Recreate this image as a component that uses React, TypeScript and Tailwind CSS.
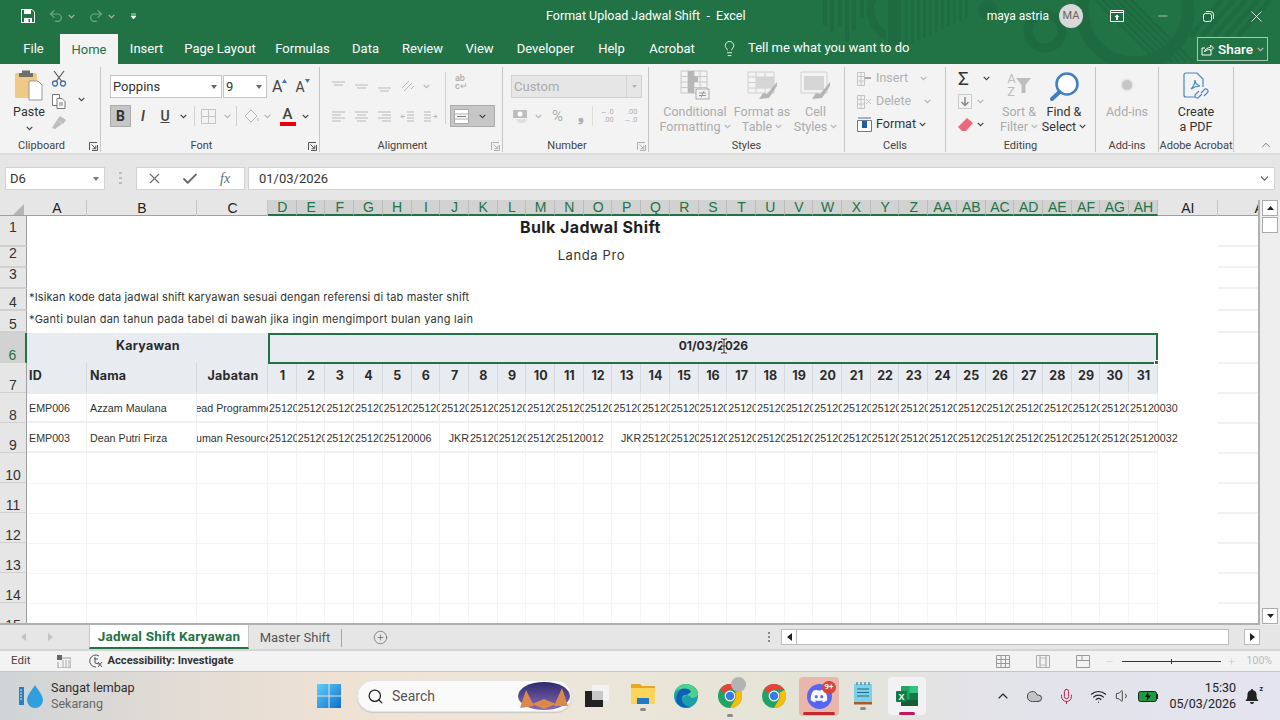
import React from "react";
import { ChevronDown, ChevronUp, Lightbulb, Search, Undo2, Redo2, X, Check, Minus, Mic, Wifi, Volume1, Plus, CirclePlus, Cloud } from "lucide-react";
import { FaDiscord } from "react-icons/fa";

const COLS = "grid grid-cols-[27px_60px_110px_71px_repeat(31,28.71px)_60px_41px]";
const SANS = "font-['Roboto',sans-serif]";
const POP = "font-['Inter',sans-serif]";
const ARIAL = "font-['Liberation_Sans',Arial,sans-serif]";

const Car = ({ dim = false, cls = "" }: { dim?: boolean; cls?: string }) => (
  <svg width="7" height="5" viewBox="0 0 7 5" className={cls}><path d="M.7.8 3.5 3.6 6.3.8" fill="none" stroke={dim ? "#b5b5b5" : "#444"} strokeWidth="1.2" /></svg>
);
const Launcher = ({ dim = false }: { dim?: boolean }) => (
  <svg width="9" height="9" viewBox="0 0 9 9"><path d="M.5 8V.5H8M8.5 3v5.5H3M2.5 2.5l4 4M6.8 3.5v3.2H3.6" fill="none" stroke={dim ? "#b0b0b0" : "#555"} /></svg>
);
const Lines = ({ a }: { a: "l" | "c" | "r" }) => {
  const d = a === "l" ? "M1 2h13M1 5h9M1 8h13M1 11h9" : a === "c" ? "M1 2h13M3 5h9M1 8h13M3 11h9" : "M1 2h13M5 5h9M1 8h13M5 11h9";
  return <svg width="15" height="13" viewBox="0 0 15 13"><path d={d} stroke="#b9b9b9" /></svg>;
};
const VAlign = ({ o }: { o: number }) => (
  <svg width="15" height="15" viewBox="0 0 15 15"><path d={`M1 ${o}h13M3 ${o + 3}h9`} stroke="#b9b9b9" /></svg>
);
const Group = ({ w, label, children, launcher, dimL }: { w: string; label: string; children: React.ReactNode; launcher?: boolean; dimL?: boolean }) => (
  <div className={`${w} flex h-[85px] flex-col border-r border-[#c6c6c6] shrink-0`}>
    <div className="flex h-[74px] min-h-0">{children}</div>
    <div className={`relative flex h-[11px] items-center justify-center text-[11px] text-[#444] whitespace-nowrap ${launcher ? "pr-[17px]" : ""}`}>
      {label}
      {launcher && <span className="absolute right-[2px] top-[1px] flex"><Launcher dim={dimL} /></span>}
    </div>
  </div>
);
const BigBtn = ({ w, l1, l2, dim, car, icon }: { w: string; l1: string; l2: string; dim?: boolean; car?: boolean; icon: React.ReactNode }) => (
  <div className={`${w} flex flex-col items-center text-[12.5px] leading-[15px] ${dim ? "text-[#ababab]" : "text-[#333]"} whitespace-nowrap`}>
    <div className="flex h-[36px] items-center justify-center">{icon}</div>
    <div className="mt-[1px]">{l1}</div>
    <div className="flex items-center gap-[3px]">{l2}{car && <Car dim={dim} />}</div>
  </div>
);
const Excel = () => (
  <svg width="24" height="24" viewBox="0 0 24 24"><rect x="6" y="2" width="17" height="20" rx="1" fill="#21a366" /><rect x="14.5" y="2" width="8.5" height="7" fill="#33c481" /><rect x="14.5" y="9" width="8.5" height="6.5" fill="#107c41" /><rect x="6" y="15.5" width="17" height="6.5" fill="#185c37" /><rect x="1" y="7" width="11" height="11" rx="1" fill="#107c41" /><text x="3.5" y="15.5" fontSize="9" fontWeight="700" fill="#fff" fontFamily="Liberation Sans">X</text></svg>
);
const Chrome = () => (
  <svg width="24" height="24" viewBox="0 0 24 24">
    <circle cx="12" cy="12" r="12" fill="#1fa463" />
    <path d="M12 0a12 12 0 0 1 10.4 6H12a6 6 0 0 0-5.4 3.3L1.8 5.7A12 12 0 0 1 12 0" fill="#ea4335" />
    <path d="M22.4 6A12 12 0 0 1 12 24l5.2-9a6 6 0 0 0 0-6z" fill="#fbbc04" />
    <circle cx="12" cy="12" r="5.4" fill="#fff" /><circle cx="12" cy="12" r="4.2" fill="#3b78e7" />
  </svg>
);

function TitleBg() {
  return (
    <svg className="absolute left-0 top-0" width="1280" height="64" viewBox="0 0 1280 64" fill="#1e6b41">
      {[[823, 26], [830, 32], [838, 26], [845, 41], [852, 30], [860, 18]].map(([x, h]) => <rect key={x} x={x} y="0" width="4" height={h} />)}
      <path d="M868 0h8a24 24 0 0 0 10 30v10a34 34 0 0 1-18-40" />
      <rect x="888" y="0" width="13" height="47" />
      {[905, 911, 917, 923, 929, 935, 941, 947, 953, 959, 965].map((x, i) => <rect key={x} x={x} y="0" width="2.5" height={46 - i * 2.8} />)}
      <circle cx="988" cy="10" r="10" />
      <circle cx="1045" cy="31" r="17" fill="none" stroke="#1e6b41" strokeWidth="9" />
      <circle cx="1135" cy="10" r="53" fill="none" stroke="#1e6b41" strokeWidth="13" />
      <g stroke="#1e6b41" strokeWidth="3">
        {[0, 7, 14, 21, 28, 35].map((d) => <path key={d} d={`M${1088 + d} -8L${1158 + d} 62`} />)}
        {[0, 12, 24, 36, 48].map((d) => <path key={d} d={`M${1222 + d} 0L${1190 + d} 36`} strokeWidth="5" />)}
      </g>
    </svg>
  );
}

function Top() {
  const tabs: [string, string][] = [["File", "w-[53px]"], ["Home", "w-[58px]"], ["Insert", "w-[57px]"], ["Page Layout", "w-[90px]"], ["Formulas", "w-[75px]"], ["Data", "w-[51px]"], ["Review", "w-[63px]"], ["View", "w-[51px]"], ["Developer", "w-[81px]"], ["Help", "w-[51px]"], ["Acrobat", "w-[70px]"]];
  return (
    <div className="relative h-[64px] shrink-0 bg-[#217346] text-white">
      <TitleBg />
      <div className="relative flex h-[32px] items-center">
        <div className="flex items-center pl-[21px]">
          <svg width="14" height="14" viewBox="0 0 14 14"><path d="M.5.5h10.5L13.5 3v10.5H.5z" fill="none" stroke="#fff" /><path d="M3 1h7v4H3zM3 9h8v4.5H3z" fill="#fff" /><rect x="7.5" y="10" width="1.5" height="3" fill="#217346" /></svg>
          <Undo2 size={16} strokeWidth={1.8} className="ml-[13px] text-[#6ea888]" />
          <Car cls="ml-[4px]" dim />
          <Redo2 size={16} strokeWidth={1.8} className="ml-[13px] text-[#6ea888]" />
          <Car cls="ml-[4px]" dim />
          <svg width="7" height="7" viewBox="0 0 7 7" className="ml-[15px]"><path d="M1 1h5M1 3h5l-2.5 3z" fill="#fff" stroke="#fff" strokeWidth=".7" /></svg>
        </div>
        <div className="absolute left-[546px] pt-[1px] text-[12.5px] whitespace-nowrap">Format Upload Jadwal Shift&nbsp; -&nbsp; Excel</div>
        <div className="ml-auto flex items-center">
          <span className="text-[12px]">maya astria</span>
          <span className="ml-[10px] flex h-[24px] w-[24px] items-center justify-center rounded-full bg-[#d9d9d9] text-[11px] text-[#666]">MA</span>
          <svg width="14" height="12" viewBox="0 0 14 12" className="ml-[27px]"><path d="M.5.5h13v11H.5z" fill="none" stroke="#fff" /><path d="M.5 2.5h13" stroke="#fff" /><path d="M7 4.5 4.5 7H6v3h2V7h1.5z" fill="#fff" /></svg>
          <Minus size={14} strokeWidth={1} className="ml-[32px]" />
          <svg width="11" height="11" viewBox="0 0 11 11" className="ml-[33px]" fill="none" stroke="#fff"><rect x=".5" y="2.5" width="8" height="8" rx="2" /><path d="M3 .5h4.5a3 3 0 0 1 3 3V8" /></svg>
          <X size={19} strokeWidth={1} className="ml-[33px] mr-[14px]" />
        </div>
      </div>
      <div className="relative flex h-[32px] pl-[7px] text-[13px]">
        {tabs.map(([t, w]) => (
          <div key={t} className={`${w} flex items-center justify-center pt-[1px] ${t === "Home" ? "mt-[2px] bg-[#f3f3f3] text-[#217346]" : ""}`}>{t}</div>
        ))}
        <Lightbulb size={17} strokeWidth={1.2} className="ml-[14px] mt-[8px]" />
        <span className="ml-[10px] mt-[7px] text-[13px] leading-[18px] whitespace-nowrap">Tell me what you want to do</span>
        <div className="ml-auto mr-[12px] mt-[5px] flex h-[24px] w-[71px] items-center justify-center gap-[4px] border border-[#a5c7b5] text-[13.5px] font-medium">
          <svg width="13" height="13" viewBox="0 0 13 13" fill="none" stroke="#fff"><path d="M1 12V5h3M1 12h9V8M3.500 9c.5-3 3-4.500 6-4.500V2l3 3-3 3V6.500c-2.500 0-5 .5-6 2.500z" /></svg>
          Share<Car cls="invert" />
        </div>
      </div>
    </div>
  );
}

function Ribbon() {
  const Combo = "flex h-[23px] items-center border border-[#c6c6c6] bg-white px-[2px] text-[13px] text-[#333]";
  return (
    <div className={`flex h-[91px] shrink-0 border-b-2 border-[#dcdcdc] bg-[#f3f3f3] pt-[3px] ${SANS}`}>
      <Group w="w-[101px]" label="Clipboard" launcher>
        <div className="flex w-[51px] flex-col items-center pl-[7px] text-[12.5px] text-[#333]">
          <svg width="30" height="31" viewBox="0 0 30 31" className="mt-[3px]"><rect x="1" y="3" width="22" height="25" rx="1.5" fill="#f0c987" /><path d="M8 3V.5h8V3h3v4H5V3z" fill="#6f6f6f" /><path d="M15 11h9l4 4v15H15z" fill="#fff" stroke="#999" /></svg>
          <div className="mt-[3px] leading-[16px]">Paste</div>
          <Car cls="mt-[6px]" />
        </div>
        <div className="flex flex-col items-center pt-[3px]">
          <svg width="16" height="17" viewBox="0 0 16 17" fill="none"><path d="M3 1l7.500 10M13 1 5.500 11" stroke="#555" strokeWidth="1.200" /><circle cx="4" cy="13.500" r="2.500" stroke="#4472a8" strokeWidth="1.300" /><circle cx="12" cy="13.500" r="2.500" stroke="#4472a8" strokeWidth="1.300" /></svg>
          <div className="mt-[6px] flex items-center">
            <svg width="16" height="16" viewBox="0 0 16 16" fill="#fff" stroke="#777"><path d="M1.5 1.5h7v11h-7z" /><path d="M6 5.5h5l3 3v7H6z" /><path d="M8 10h4M8 12h4" /></svg>
          </div>
          <svg width="16" height="15" viewBox="0 0 16 15" className="mt-[6px]"><path d="M9 1l6 4-3 4-6-4zM6 5 1 13l3 1 7-5z" fill="#bdbdbd" /></svg>
        </div>
        <Car cls="ml-[11px] mt-[30px]" />
      </Group>

      <Group w="w-[219px]" label="Font" launcher>
        <div className="flex flex-col pl-[9px] pt-[8px]">
          <div className="flex items-center">
            <div className={`${Combo} w-[112px] justify-between`}>Poppins<svg width="6" height="4" className="mr-[2px]"><path d="M0 0h6L3 4z" fill="#666" /></svg></div>
            <div className={`${Combo} ml-[1px] w-[44px] justify-between`}>9<svg width="6" height="4" className="mr-[2px]"><path d="M0 0h6L3 4z" fill="#666" /></svg></div>
            <span className="ml-[5px] flex items-start text-[16px] leading-[20px] text-[#444]">A<svg width="5" height="4" className="mt-[2px]"><path d="M2.5 0 5 4H0z" fill="#4472a8" /></svg></span>
            <span className="ml-[8px] flex items-start text-[14px] leading-[20px] text-[#444]">A<svg width="5" height="4" className="mt-[2px]"><path d="M0 0h5L2.5 4z" fill="#4472a8" /></svg></span>
          </div>
          <div className="mt-[7px] flex h-[22px] items-center">
            <div className="flex h-[22px] w-[21px] items-center justify-center border border-[#ababab] bg-[#c6c6c6] text-[14px] font-bold text-[#333]">B</div>
            <span className="flex w-[24px] justify-center text-[14px] italic font-semibold text-[#444]">I</span>
            <span className="flex w-[20px] justify-center text-[14px] font-medium text-[#444] underline">U</span>
            <Car cls="ml-[5px]" />
            <span className="ml-[7px] h-[20px] w-px bg-[#d0d0d0]" />
            <svg width="15" height="15" viewBox="0 0 15 15" className="ml-[6px]" stroke="#c4c4c4" fill="none"><path d="M.5.5h14v14H.5zM7.5.5v14M.5 7.5h14" /></svg>
            <Car dim cls="ml-[8px]" />
            <span className="ml-[5px] h-[20px] w-px bg-[#d0d0d0]" />
            <svg width="16" height="15" viewBox="0 0 16 15" className="ml-[7px]" fill="none" stroke="#b5b5b5"><path d="M7 1 1 7l6 6 6-6z" /><path d="M14 9v3" /></svg>
            <Car dim cls="ml-[4px]" />
            <span className="ml-[8px] flex h-[20px] w-[17px] flex-col items-center text-[15px] font-medium leading-[16px] text-[#444]">A<span className="h-[4px] w-[16px] bg-[#e8000d]" /></span>
            <Car cls="ml-[6px]" />
          </div>
        </div>
      </Group>

      <Group w="w-[183px]" label="Alignment" launcher dimL>
        <div className="flex flex-col pl-[11px] pt-[7px]">
          <div className="flex h-[24px] items-center gap-[8px]">
            <VAlign o={3} /><VAlign o={6} /><VAlign o={9} />
            <svg width="15" height="14" viewBox="0 0 15 14" fill="none" stroke="#b9b9b9"><path d="M2 9 9 2M4 12l8-8M11 10l3-3" /></svg>
            <Car dim />
          </div>
          <div className="mt-[7px] flex h-[22px] items-center gap-[8px]">
            <Lines a="l" /><Lines a="c" /><Lines a="r" />
            <svg width="15" height="13" viewBox="0 0 15 13" fill="none" stroke="#b9b9b9"><path d="M7 2h7M7 5h7M7 8h7M7 11h7M5 6.5H1M3 4.5l-2 2 2 2" /></svg>
            <svg width="15" height="13" viewBox="0 0 15 13" fill="none" stroke="#b9b9b9"><path d="M1 2h7M1 5h7M1 8h7M1 11h7M10 6.5h4M12 4.5l2 2-2 2" /></svg>
          </div>
        </div>
        <span className="ml-[7px] mt-[5px] h-[52px] w-px bg-[#d0d0d0]" />
        <div className="ml-[4px] flex flex-col pt-[7px]">
          <div className="ml-[5px] flex h-[24px] flex-col items-start text-[9px] font-medium leading-[8px] text-[#aaa]"><span>ab</span><span>c↵</span></div>
          <div className="mt-[7px] flex h-[22px] w-[45px] items-center justify-between border border-[#ababab] bg-[#c6c6c6] px-[3px]">
            <svg width="15" height="15" viewBox="0 0 15 15" fill="#fff" stroke="#aaa"><path d="M.5.5h14v14H.5zM.5 5h14M.5 10h14" /><path d="M3 7.5h9" stroke="#777" /></svg>
            <Car cls="mr-[5px]" />
          </div>
        </div>
      </Group>

      <Group w="w-[146px]" label="Number" launcher dimL>
        <div className="flex flex-col pl-[8px] pt-[8px]">
          <div className="flex h-[23px] w-[131px] items-center justify-between border border-[#d2d2d2] bg-[#e6e6e6] px-[2px] text-[13px] text-[#ababab]">Custom<span className="flex h-full items-center border-l border-[#d2d2d2] pl-[5px] pr-[2px]"><svg width="5" height="3"><path d="M0 0h5L2.500 3z" fill="#b5b5b5" /></svg></span></div>
          <div className="mt-[7px] flex h-[22px] items-center text-[#b0b0b0]">
            <svg width="17" height="16" viewBox="0 0 17 16" className="ml-[2px]"><rect x="0" y="2" width="14" height="8" fill="#bdbdbd" /><circle cx="7" cy="6" r="2.5" fill="#fff" /><path d="M4 12h10M5 14h7" stroke="#ccc" /></svg>
            <Car dim cls="ml-[5px]" />
            <span className="ml-[10px] text-[15px]">%</span>
            <span className="ml-[15px] text-[15px] font-bold leading-[14px]">❟</span>
            <span className="ml-[8px] h-[20px] w-px bg-[#dddddd]" />
            <span className="ml-[7px] flex flex-col items-end text-[7.5px] leading-[8px]"><span>←.0</span><span>.00</span></span>
            <span className="ml-[10px] flex flex-col items-end text-[7.5px] leading-[8px]"><span>.00</span><span>→.0</span></span>
          </div>
        </div>
      </Group>

      <Group w="w-[196px]" label="Styles">
        <BigBtn w="w-[92px]" l1="Conditional" l2="Formatting" car dim icon={
          <svg width="30" height="30" viewBox="0 0 30 30" fill="none" stroke="#c8c8c8"><path d="M1 1h26v22H1zM1 6.500h26M1 12h26M1 17.500h26M8 1v22M14 1v22M20 1v22" /><path d="M8 1h6v5h4v6h-4v11H8z" fill="#b7b7b7" stroke="none" /><rect x="16" y="19" width="13" height="10" fill="#f3f3f3" stroke="#aaa" /><path d="M19 23h7M19 25.500h7M24 21l-3 6.500" stroke="#999" /></svg>
        } />
        <BigBtn w="w-[42px]" l1="Format as" l2="Table" car dim icon={
          <svg width="31" height="30" viewBox="0 0 31 30" fill="none" stroke="#d0d0d0"><path d="M1 2h26v21H1zM1 7h26M1 12.500h26M1 18h26M9 2v21M18 2v21" /><rect x="9" y="7" width="18" height="11" fill="#d5d5d5" stroke="none" /><path d="M30 12 20 24l-4-1-4 6 10-1 2-3 6-9z" fill="#b5b5b5" stroke="none" /></svg>
        } />
        <span className="w-[17px]" />
        <BigBtn w="w-[31px]" l1="Cell" l2="Styles" car dim icon={
          <svg width="31" height="30" viewBox="0 0 31 30" fill="none" stroke="#d0d0d0"><path d="M1 2h26v21H1z" /><rect x="4" y="6" width="20" height="14" fill="#d5d5d5" stroke="none" /><path d="M30 12 20 24l-4-1-4 6 10-1 2-3 6-9z" fill="#b5b5b5" stroke="none" /></svg>
        } />
      </Group>

      <Group w="w-[101px]" label="Cells">
        <div className="flex flex-col pl-[12px] text-[12.5px]">
          <div className="flex h-[23px] items-center text-[#b0b0b0]">
            <svg width="15" height="14" viewBox="0 0 15 14" fill="none" stroke="#c4c4c4"><path d="M.5.500h7v13h-7zM.5 4.500h7M.5 9h7M4 .5v13" /><path d="M8 6h6" stroke="#aaa" strokeWidth="2" /></svg>
            <span className="ml-[4px] w-[44px]">Insert</span><Car dim />
          </div>
          <div className="flex h-[23px] items-center text-[#b0b0b0]">
            <svg width="15" height="14" viewBox="0 0 15 14" fill="none" stroke="#c4c4c4"><path d="M.5.500h7v13h-7zM.5 4.500h7M.5 9h7M4 .5v13M9 4l5 5M14 4l-5 5" /></svg>
            <span className="ml-[4px] w-[48px]">Delete</span><Car dim />
          </div>
          <div className="flex h-[22px] items-center text-[#333]">
            <svg width="15" height="15" viewBox="0 0 15 15" fill="#fff" stroke="#777"><path d="M.5 3.500h14v11H.5z" /><rect x="5" y="4" width="5" height="7" fill="#1e5fa8" stroke="none" /><path d="M1 1h13" stroke="#4472a8" /></svg>
            <span className="ml-[4px]">Format</span><Car cls="ml-[3px]" />
          </div>
        </div>
      </Group>

      <Group w="w-[150px]" label="Editing">
        <div className="flex w-[45px] flex-col pl-[12px]">
          <div className="flex h-[23px] items-center text-[19px] text-[#333] leading-none">Σ<Car cls="ml-[14px]" /></div>
          <div className="flex h-[23px] items-center"><svg width="14" height="15" viewBox="0 0 14 15" fill="none"><path d="M.5.500h13v14H.5z" stroke="#c9c9c9" /><path d="M7 3v8M3.500 8 7 11.500 10.500 8" stroke="#888" strokeWidth="1.5" /></svg><Car dim cls="ml-[5px]" /></div>
          <div className="flex h-[22px] items-center"><svg width="15" height="13" viewBox="0 0 15 13"><path d="M9 0l6 5-7 8H4L0 9z" fill="#eb6a7a" /></svg><Car cls="ml-[4px]" /></div>
        </div>
        <BigBtn w="w-[56px]" l1="Sort &" l2="Filter" car dim icon={
          <span className="flex items-center text-[#bdbdbd]"><span className="flex flex-col text-[13px] leading-[13px]"><span>A</span><span>Z</span></span><svg width="15" height="15" viewBox="0 0 15 15"><path d="M0 0h15L9.500 7v8h-4V7z" fill="#bdbdbd" /></svg></span>
        } />
        <BigBtn w="w-[34px]" l1="Find &" l2="Select" car icon={
          <svg width="29" height="29" viewBox="0 0 29 29" className="mt-[2px]" fill="none"><circle cx="17" cy="12" r="10.500" stroke="#3f7fc4" strokeWidth="2.500" fill="#fff" /><path d="M9.500 20 2 27" stroke="#3f7fc4" strokeWidth="4" strokeLinecap="round" /></svg>
        } />
      </Group>

      <Group w="w-[63px]" label="Add-ins">
        <BigBtn w="w-full" l1="Add-ins" l2="" dim icon={<span className="h-[10px] w-[10px] rounded-full bg-[#c6c6c6] shadow-[0_0_3px_#c6c6c6]" />} />
      </Group>

      <Group w="w-[75px]" label="Adobe Acrobat">
        <BigBtn w="w-full" l1="Create" l2="a PDF" icon={
          <svg width="26" height="29" viewBox="0 0 26 29" className="mt-[2px]" fill="none" stroke="#4a86c8" strokeWidth="1.200"><path d="M3 1h11l6 6v8M3 1a2 2 0 0 0-2 2v20a2 2 0 0 0 2 2h9" /><path d="M8 17c3-3 4-6 4-9 0 3 2 5 5 6-3 0-6 1-9 3z" /><path d="M18 21l4-4a2.500 2.500 0 0 1 3 3l-4 4M19 22l-4 4a2.500 2.500 0 0 1-3-3l4-4" /></svg>
        } />
      </Group>
      <div className="flex h-[85px] flex-1 items-end justify-end pr-[7px]"><ChevronUp size={14} strokeWidth={1.2} className="text-[#444]" /></div>
    </div>
  );
}

function FormulaBar() {
  return (
    <div className={`flex h-[45px] shrink-0 items-start bg-[#e6e6e6] pl-[5px] pt-[12px] ${SANS}`}>
      <div className="flex h-[23px] w-[100px] items-center justify-between border border-[#d2d2d2] bg-white pl-[4px] pr-[5px] text-[13px] text-[#333]">D6<svg width="6" height="4"><path d="M0 0h6L3 4z" fill="#777" /></svg></div>
      <div className="ml-[14px] mt-[5px] flex h-[12px] w-[3px] flex-col justify-between">{[0, 1, 2].map((i) => <span key={i} className="h-[2px] w-[3px] bg-[#bdbdbd]" />)}</div>
      <div className="ml-[14px] flex h-[23px] w-[109px] items-center border border-[#d2d2d2] bg-white pl-[9px] text-[#6a6a6a]">
        <X size={17} strokeWidth={1.6} /><Check size={18} strokeWidth={2.4} className="ml-[18px]" />
        <span className="ml-[21px] font-['Liberation_Serif',serif] text-[14px] italic">fx</span>
      </div>
      <div className="ml-[3px] flex h-[23px] w-[1027px] items-center justify-between border border-[#d2d2d2] bg-white pl-[10px] pr-[3px] text-[13px] text-[#333]">01/03/2026<ChevronDown size={13} className="text-[#555]" /></div>
    </div>
  );
}

const colNames = ["D","E","F","G","H","I","J","K","L","M","N","O","P","Q","R","S","T","U","V","W","X","Y","Z","AA","AB","AC","AD","AE","AF","AG","AH"];

function ColHeaders() {
  const cls = "flex h-[16px] items-center justify-center pl-px text-[14px] leading-none";
  return (
    <div className={`${COLS} ${ARIAL} h-[16px] border-b border-[#9f9f9f] bg-[#e6e6e6]`}>
      <div className="flex items-end justify-end pb-[1px] pr-[3px]"><svg width="11" height="11"><path d="M11 0v11H0z" fill="#b5b5b5" /></svg></div>
      {["A", "B", "C"].map((c) => <div key={c} className={`${cls} border-r border-[#c6c6c6] text-[#222]`}>{c}</div>)}
      {colNames.map((c) => <div key={c} className={`${cls} border-r border-[#bcbcbc] border-b-2 border-b-[#217346] bg-[#d2d2d2] text-[#217346]`}>{c}</div>)}
      <div className={`${cls} border-r border-[#c6c6c6] text-[#222]`}>AI</div>
      <div className={`${cls} justify-end overflow-hidden text-[#222]`}><span className="-mr-[5px]">A</span></div>
    </div>
  );
}

const RowHead = ({ n, sel, pt }: { n: number; sel?: boolean; pt: string }) => (
  <div className={`flex justify-center border-b-2 border-r border-[#d0d0d0] border-r-[#9f9f9f] ${ARIAL} text-[14px] leading-[14px] ${sel ? "border-r-2 border-r-[#217346] bg-[#d2d2d2] text-[#217346]" : "bg-[#e6e6e6] text-[#333]"}`}><span className={pt}>{n}</span></div>
);

function DataRow({ n, id, name, job, cells }: { n: number; id: string; name: string; job: string; cells: string[] }) {
  const base = "flex h-[30px] items-start pt-[9px] shadow-[inset_-1px_-2px_0_#eef0f4] text-[10.7px] leading-[12px] whitespace-nowrap";
  return (
    <div className={`${COLS} ${ARIAL} h-[30px] text-[#333]`}>
      <RowHead n={n} pt="pt-[15px]" />
      <div className={`${base} pl-[2px] overflow-hidden`}>{id}</div>
      <div className={`${base} pl-[3px] overflow-hidden`}>{name}</div>
      <div className={`${base} justify-center overflow-hidden`}>{job}</div>
      {cells.map((v, i) => (
        <div key={i} className={`${base} ${v === "JKR" ? "justify-end" : "pl-px"} ${v.endsWith("0006") || v.endsWith("0012") || i === 30 ? "overflow-visible" : "overflow-hidden"}`}>{v}</div>
      ))}
      <div />
      <div className="border-b-2 border-[#f1f1f1]" />
    </div>
  );
}

function Sheet() {
  const P = "25120001";
  const r8 = Array.from({ length: 30 }, () => P).concat("25120030");
  const r9 = r8.map((_, i) => (i === 4 ? "25120006" : i === 5 ? "" : i === 6 ? "JKR" : i === 10 ? "25120012" : i === 11 ? "" : i === 12 ? "JKR" : i === 30 ? "25120032" : P));
  const pad = "border-b-2 border-[#f1f1f1]";
  const note = `${POP} col-span-34 flex items-start pl-[2px] text-[11px] leading-[16px] text-[#333] whitespace-nowrap`;
  return (
    <div className="min-w-0 flex-1 overflow-hidden border-b-2 border-r-2 border-[#b0b0b0] bg-white">
      <ColHeaders />
      <div className={`${COLS} h-[31px]`}>
        <RowHead n={1} pt="pt-[4px]" />
        <div className={`${POP} col-span-34 flex justify-center pr-[4px] text-[16px] font-bold leading-[22px] tracking-[0.4px] text-[#1f1f1f]`}>Bulk Jadwal Shift</div>
        <div /><div className={pad} />
      </div>
      <div className={`${COLS} h-[21px]`}>
        <RowHead n={2} pt="-mt-px" />
        <div className={`${POP} col-span-34 flex justify-center pr-[2px] text-[13px] leading-[16px] tracking-[0.6px] text-[#333]`}>Landa Pro</div>
        <div /><div className={pad} />
      </div>
      <div className={`${COLS} h-[21px]`}>
        <RowHead n={3} pt="-mt-px" />
        <div className="col-span-34" /><div /><div className={pad} />
      </div>
      <div className={`${COLS} h-[22px]`}>
        <RowHead n={4} pt="pt-[6px]" />
        <div className={`${note} tracking-[0.13px]`}>*Isikan kode data jadwal shift karyawan sesuai dengan referensi di tab master shift</div>
        <div /><div className={pad} />
      </div>
      <div className={`${COLS} h-[22px]`}>
        <RowHead n={5} pt="pt-[6px]" />
        <div className={`${note} tracking-[0.26px]`}>*Ganti bulan dan tahun pada tabel di bawah jika ingin mengimport bulan yang lain</div>
        <div /><div className={pad} />
      </div>
      <div className={`${COLS} h-[30px]`}>
        <RowHead n={6} sel pt="pt-[15px]" />
        <div className={`${POP} col-span-3 flex justify-center bg-[#e8ebf0] pl-px pt-[5px] text-[12.500px] font-bold leading-[16px] tracking-[0.25px] text-[#2b2b2b]`}>Karyawan</div>
        <div className={`${POP} relative col-span-31 flex justify-center border-2 border-[#217346] bg-[#e8ebf0] pl-px pt-[3px] text-[12px] font-bold leading-[16px] text-[#2b2b2b]`}>
          01/03/2026
          <svg width="12" height="16" viewBox="0 0 12 16" className="absolute left-[448px] top-[3px]" fill="none"><path d="M3 1h2.500L6 2l.5-1H9M6 2v12M3 15h2.500l.5-1 .5 1H9M4 8h4" stroke="#fff" strokeWidth="3" /><path d="M3 1h2.500L6 2l.5-1H9M6 2v12M3 15h2.500l.5-1 .5 1H9M4 8h4" stroke="#222" /></svg>
          <span className="absolute -bottom-[3px] -right-[3px] h-[5px] w-[5px] border border-white bg-[#217346]" />
        </div>
        <div /><div className={pad} />
      </div>
      <div className={`${COLS} h-[30px]`}>
        <RowHead n={7} pt="pt-[15px]" />
        {["ID", "Nama", "Jabatan"].map((h, i) => (
          <div key={h} className={`${POP} flex bg-[#e8ebf0] ${i === 2 ? "justify-center pl-[2px]" : i === 1 ? "pl-[3px]" : "pl-[2px]"} border-r border-[#d6d9de] pt-[5px] text-[12.500px] font-bold leading-[16px] tracking-[0.2px] text-[#2b2b2b]`}>{h}</div>
        ))}
        {Array.from({ length: 31 }, (_, i) => (
          <div key={i} className={`${POP} flex justify-center border-r border-[#d6d9de] bg-[#e8ebf0] pl-px pt-[5px] text-[12.500px] font-bold leading-[16px] text-[#2b2b2b]`}>{i + 1}</div>
        ))}
        <div /><div className={pad} />
      </div>
      <DataRow n={8} id="EMP006" name="Azzam Maulana" job="Lead Programmer" cells={r8} />
      <DataRow n={9} id="EMP003" name="Dean Putri Firza" job="Human Resources" cells={r9} />
      {[10, 11, 12, 13, 14, 15].map((n) => (
        <div key={n} className={`${COLS} h-[30px]`}>
          <RowHead n={n} pt="pt-[15px]" />
          {Array.from({ length: 34 }, (_, i) => <div key={i} className="border-b border-r border-[#f4f5f6]" />)}
          <div /><div className={pad} />
        </div>
      ))}
    </div>
  );
}

function VScroll() {
  const b = "flex h-[16px] w-[16px] items-center justify-center border border-[#ababab] bg-white";
  return (
    <div className="flex w-[20px] shrink-0 flex-col items-center justify-between bg-[#eeeeee] pb-[1px]">
      <div className="flex flex-col gap-px">
        <div className={b}><svg width="7" height="4"><path d="M3.500 0 7 4H0z" fill="#222" /></svg></div>
        <div className="h-[16px] w-[16px] border border-[#ababab] bg-white" />
      </div>
      <div className={b}><svg width="7" height="4"><path d="M0 0h7L3.500 4z" fill="#222" /></svg></div>
    </div>
  );
}

function SheetTabs() {
  return (
    <div className={`flex h-[26px] shrink-0 items-start border-b-2 border-[#d4d4d4] bg-[#e6e6e6] ${SANS}`}>
      <svg width="5" height="8" className="ml-[21px] mt-[8px]"><path d="M5 0v8L0 4z" fill="#c2c2c2" /></svg>
      <svg width="5" height="8" className="ml-[22px] mt-[8px]"><path d="M0 0v8l5-4z" fill="#c2c2c2" /></svg>
      <div className="ml-[36px] flex h-[24px] w-[160px] items-center justify-center border-b-2 border-[#217346] border-l border-r border-l-[#c6c6c6] border-r-[#c6c6c6] bg-white pt-[1px] text-[13.500px] font-bold tracking-[0.2px] text-[#217346]">Jadwal Shift Karyawan</div>
      <div className="mt-[4px] flex h-[18px] w-[93px] items-center justify-center border-r border-[#a6a6a6] text-[13px] text-[#555]">Master Shift</div>
      <CirclePlus size={15} strokeWidth={1} className="ml-[31px] mt-[5px] text-[#555]" />
      <div className="ml-[380px] mt-[7px] flex flex-col gap-[2px]">{[0, 1, 2].map((i) => <span key={i} className="h-[2px] w-[2px] bg-[#8a8a8a]" />)}</div>
      <div className="ml-[11px] mt-[4px] flex h-[16px] w-[16px] items-center justify-center border border-[#bcbcbc] bg-white"><svg width="5" height="8"><path d="M5 0v8L0 4z" fill="#222" /></svg></div>
      <div className="mt-[4px] h-[16px] w-[432px] border-y border-r border-[#bcbcbc] bg-white" />
      <div className="ml-[15px] mt-[4px] flex h-[16px] w-[16px] items-center justify-center border border-[#bcbcbc] bg-white"><svg width="5" height="8"><path d="M0 0v8l5-4z" fill="#222" /></svg></div>
    </div>
  );
}

function StatusBar() {
  return (
    <div className={`flex h-[21px] shrink-0 items-center border-b border-[#c6c6c6] bg-[#f3f3f3] ${SANS}`}>
      <span className="ml-[11px] text-[11.500px] text-[#444]">Edit</span>
      <svg width="14" height="13" viewBox="0 0 14 13" className="ml-[27px]"><path d="M5 3h9v10H1V7" fill="none" stroke="#999" /><rect x="0" y="0" width="5" height="5" fill="#666" /><path d="M6 5v8M9 5v8M12 5v8" stroke="#aaa" /></svg>
      <svg width="14" height="14" viewBox="0 0 14 14" className="ml-[18px]" fill="none" stroke="#555"><path d="M10 2A6 6 0 1 0 7 13M6 3v6l4 1M5 5h4M9 8l4 5M13 8l-4 5" /></svg>
      <span className="ml-[4px] text-[11.200px] font-bold text-[#333]">Accessibility: Investigate</span>
      <div className="ml-auto mr-[8px] flex items-center">
        <svg width="14" height="13" viewBox="0 0 14 13" fill="none" stroke="#999"><path d="M.5.500h13v12H.5zM.5 4.500h13M.5 8.500h13M5 .5v12M9.500.5v12" /></svg>
        <svg width="14" height="13" viewBox="0 0 14 13" className="ml-[26px]" fill="none" stroke="#aaa"><path d="M.5.500h13v12H.5zM4 .5v12M10 .5v12" /><rect x="4" y="3" width="6" height="7" stroke="#bbb" /></svg>
        <svg width="14" height="13" viewBox="0 0 14 13" className="ml-[26px]" fill="none" stroke="#999"><path d="M.5.500h13v12H.5zM6 .5v5H.5" /><path d="M6 5.500h7.500" /></svg>
        <Minus size={9} className="ml-[15px] text-[#cfcfcf]" />
        <div className="relative ml-[8px] h-px w-[99px] bg-[#333]"><span className="absolute left-[49px] -top-[2px] h-[5px] w-px bg-[#333]" /></div>
        <Plus size={9} className="ml-[6px] text-[#cfcfcf]" />
        <span className="ml-[11px] text-[10.500px] text-[#bbb]">100%</span>
      </div>
    </div>
  );
}

function Taskbar() {
  return (
    <div className={`relative flex h-[48px] flex-1 items-center bg-[linear-gradient(90deg,#cfd4d6_0%,#e3dcd4_15%,#efe2d4_27%,#ece6da_45%,#e4e4d6_62%,#e3e3ea_78%,#e4e3f0_100%)] ${SANS}`}>
      <svg width="26" height="24" viewBox="0 0 26 24" className="ml-[19px]"><rect x="0" y="3" width="5" height="18" fill="#2a7fc8" /><path d="M1 6h2M1 9h2M1 12h2M1 15h2" stroke="#cfe6f7" /><path d="M16 1c3 5 8 10 8 15a8 8 0 0 1-16 0c0-5 5-10 8-15z" fill="#2f9fe0" /></svg>
      <div className="ml-[6px] flex w-[100px] flex-col whitespace-nowrap text-[12.500px] leading-[16px]">
        <span className="text-[#2d2d2d]">Sangat lembap</span>
        <span className="text-[#666]">Sekarang</span>
      </div>
      <svg width="24" height="24" viewBox="0 0 24 24" className="ml-[166px]">
        <defs><linearGradient id="w" x1="0" y1="0" x2="1" y2="1"><stop offset="0" stopColor="#5fd0f5" /><stop offset="1" stopColor="#0a6fd0" /></linearGradient></defs>
        <path d="M0 0h11.500v11.500H0zM12.500 0H24v11.500H12.500zM0 12.500h11.500V24H0zM12.500 12.500H24V24H12.500z" fill="url(#w)" />
      </svg>
      <div className="ml-[16px] flex h-[32px] w-[215px] items-center rounded-full border border-[#e4e4e4] bg-[#fbfafa] pl-[9px] shadow-[0_1px_1px_#c9c9c9]">
        <Search size={17} strokeWidth={1.8} className="text-[#222]" />
        <span className="ml-[8px] flex-1 pt-[1px] text-[14px] text-[#555]">Search</span>
        <svg width="52" height="28" viewBox="0 0 52 28" className="mr-[1px]"><defs><linearGradient id="n" x1="0" y1="0" x2="0" y2="1"><stop offset="0" stopColor="#2d2a6e" /><stop offset="1" stopColor="#8a6bb8" /></linearGradient></defs><ellipse cx="26" cy="14" rx="26" ry="14" fill="url(#n)" /><path d="M2 26 8 8l8 16zM36 24l8-18 6 18zM14 22l12-5 12 5-12 5z" fill="#d98a4a" /></svg>
      </div>
      <svg width="24" height="22" viewBox="0 0 24 22" className="ml-[13px]"><rect x="7" y="0" width="17" height="16" fill="#f2f2f2" /><rect x="0" y="6" width="18" height="16" fill="#222" /><rect x="7" y="6" width="11" height="9" fill="#c8c8c8" /></svg>
      <div className="ml-[22px] flex flex-col items-center">
        <svg width="24" height="22" viewBox="0 0 24 22"><path d="M0 3a1 1 0 0 1 1-1h8l2 2h12a1 1 0 0 1 1 1v3H0z" fill="#e6a820" /><path d="M0 6h24v16H0z" fill="#fbd65a" /><path d="M6 22v-6h12v6z" fill="#1f78c8" /></svg>
        <span className="mt-[4px] h-[3px] w-[6px] rounded-full bg-[#8a8a8a]" />
      </div>
      <svg width="24" height="24" viewBox="0 0 24 24" className="ml-[19px] -mt-[1px]"><circle cx="12" cy="12" r="12" fill="#1ba0a8" /><path d="M2 16C3 5 12 0 18 2c3 1 6 4 6 8 0 3-3 4-7 4-1-3-8-5-9 0-1 4 3 9 9 9-7 2-14-1-15-7z" fill="#0e5fb8" /><path d="M8 14c1-5 8-3 9 0 4 0 7-1 7-4 0-6-7-10-12-10A12 12 0 0 0 1 8c3-3 14-6 16 0z" fill="#4cd28e" /></svg>
      <div className="relative ml-[20px] flex flex-col items-center">
        <Chrome />
        <span className="absolute -right-[4px] -top-[7px] h-[15px] w-[15px] rounded-full bg-[#b3b3b3]" />
        <span className="absolute -bottom-[9px] h-[3px] w-[6px] rounded-full bg-[#8a8a8a]" />
      </div>
      <div className="ml-[20px]"><Chrome /></div>
      <div className="relative ml-[13px] flex h-[39px] w-[40px] items-center justify-center rounded-[4px] bg-[#e9b6ac]">
        <span className="flex h-[25px] w-[25px] items-center justify-center rounded-full bg-[#5865f2]"><FaDiscord size={18} className="text-white" /></span>
        <span className="absolute right-[3px] top-[4px] flex h-[13px] w-[14px] items-center justify-center rounded-full bg-[#d9453e] text-[8px] font-semibold text-white">9+</span>
        <span className="absolute bottom-[1px] h-[3px] w-[32px] rounded-full bg-[#c22a2a]" />
      </div>
      <div className="ml-[15px] flex flex-col items-center">
        <svg width="18" height="24" viewBox="0 0 18 24"><rect y="2" width="18" height="19" fill="#7fd0e6" /><path d="M3 7h12M3 10.500h12M3 14h12" stroke="#1a6f88" /><rect y="20" width="18" height="2.500" fill="#a85a2a" /><path d="M3 0v3M7 0v3M11 0v3M15 0v3" stroke="#1a6f88" /></svg>
        <span className="mt-[1px] h-[3px] w-[6px] rounded-full bg-[#8a8a8a]" />
      </div>
      <div className="relative ml-[16px] flex h-[38px] w-[38px] items-center justify-center rounded-[4px] bg-[#f2f2f4]">
        <Excel />
        <span className="absolute bottom-0 h-[3px] w-[16px] rounded-full bg-[#c2185b]" />
      </div>
      <ChevronUp size={16} strokeWidth={1.6} className="ml-[69px] text-[#222]" />
      <Cloud size={17} strokeWidth={1.2} fill="#c4c4c4" className="ml-[15px] text-[#333]" />
      <Mic size={17} strokeWidth={1.4} className="ml-[15px] text-[#b81e4a]" />
      <Wifi size={17} strokeWidth={1.6} className="ml-[15px] text-[#222]" />
      <Volume1 size={16} strokeWidth={1.2} className="ml-[8px] text-[#222]" />
      <svg width="20" height="11" viewBox="0 0 20 11" className="ml-[7px]"><rect x=".5" y=".5" width="18" height="10" rx="2" fill="#1f9a3e" stroke="#222" /><rect x="19" y="3" width="1" height="5" fill="#222" /><path d="M10 1 7 6h2.500l-1 4L13 4.500h-2.500z" fill="#111" /></svg>
      <div className="ml-[7px] flex w-[71px] flex-col items-end text-[12.500px] leading-[16px] text-[#222]">
        <span>15:30</span><span>05/03/2026</span>
      </div>
      <span className="relative ml-[9px] flex">
        <svg width="14" height="15" viewBox="0 0 14 15"><path d="M7 0a1 1 0 0 1 1 1.200A4.500 4.500 0 0 1 11.500 6c0 4 1.500 5 2 6H.5c.5-1 2-2 2-6A4.500 4.500 0 0 1 6 1.200 1 1 0 0 1 7 0zM5 13h4a2 2 0 0 1-4 0z" fill="#222" /></svg>
        <span className="absolute -right-[4px] -top-[4px] text-[7px] font-bold leading-[8px] text-[#222]">z</span>
      </span>
    </div>
  );
}

export default function App() {
  return (
    <div className={`flex h-[720px] w-[1280px] flex-col overflow-hidden bg-[#e6e6e6] ${SANS}`}>
      <Top />
      <Ribbon />
      <FormulaBar />
      <div className="flex h-[425px] shrink-0">
        <Sheet />
        <VScroll />
      </div>
      <SheetTabs />
      <StatusBar />
      <Taskbar />
    </div>
  );
}
